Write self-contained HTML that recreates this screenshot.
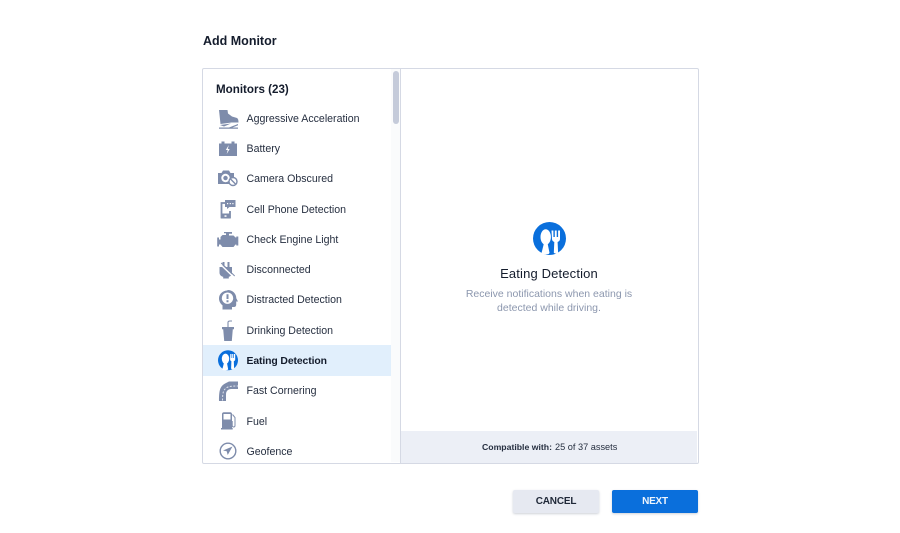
<!DOCTYPE html>
<html><head><meta charset="utf-8"><style>
html,body{margin:0;padding:0;background:#fff}
body{width:900px;height:533px;position:relative;overflow:hidden;font-family:"Liberation Sans",sans-serif;color:#1a2233}
.t{position:absolute;white-space:nowrap;line-height:14px}
.i{left:246.5px;font-size:10.600px;color:#262f40}
svg{position:absolute;left:0;top:0}
</style></head><body>
<div class="t" style="left:203px;top:34px;font-size:12.500px;font-weight:bold;color:#141c2c">Add Monitor</div>
<div style="position:absolute;left:202px;top:68px;width:495px;height:394px;border:1px solid #d5d9e4;border-radius:2px"></div>
<div style="position:absolute;left:391px;top:69px;width:9px;height:393px;background:#fafbfc"></div>
<div style="position:absolute;left:400px;top:69px;width:1px;height:394px;background:#d5d9e4"></div>
<div style="position:absolute;left:393px;top:71px;width:6px;height:53px;border-radius:3px;background:#c5cbda"></div>
<div style="position:absolute;left:203px;top:345px;width:188px;height:31px;background:#e1effc"></div>
<div style="position:absolute;left:401px;top:431px;width:296px;height:32px;background:#eceff6"></div>
<div class="t" style="left:216px;top:83px;font-size:11.600px;font-weight:bold;color:#141c2c">Monitors (23)</div>
<div class="t i" style="top:112px">Aggressive Acceleration</div>
<div class="t i" style="top:142px">Battery</div>
<div class="t i" style="top:172px">Camera Obscured</div>
<div class="t i" style="top:203px">Cell Phone Detection</div>
<div class="t i" style="top:233px">Check Engine Light</div>
<div class="t i" style="top:263px">Disconnected</div>
<div class="t i" style="top:293px">Distracted Detection</div>
<div class="t i" style="top:324px">Drinking Detection</div>
<div class="t i" style="top:355px;font-weight:bold;font-size:10.400px;letter-spacing:-.1px;color:#141c2c">Eating Detection</div>
<div class="t i" style="top:384px">Fast Cornering</div>
<div class="t i" style="top:415px">Fuel</div>
<div class="t i" style="top:445px">Geofence</div>
<svg width="900" height="533" viewBox="0 0 900 533">
<g fill="#7e8cab">
<!-- shoe -->
<path d="M219 110h8.500l.5 3.500 4 3 5 1.500c1 .5 1.500 2 1.500 4.500h-7l-11 1.500z"/>
<path d="M220 125l11-1.500-7 3z"/>
<path d="M219 127.500h10l9-3.500v1.200l-5.500 2.300h5.500v1.200h-19z"/>
<!-- battery -->
<path fill-rule="evenodd" d="M219 143.500h2.500v-2h3v2h7v-2h3v2h2.500v12.500h-18zM228.800 145l-3 5h1.900l-1 4 3-5h-1.900z"/>
<!-- camera -->
<path fill-rule="evenodd" d="M218 173h3.500l1.500-2.500h6l1.500 2.500h3.500v4c-3 .5-5 3-5 7h-10.500c-.5 0-.5 0-.5-.5zM225.500 173.800a4.200 4.200 0 1 0 .01 0z"/>
<path d="M225.500 175.800a2.200 2.200 0 1 0 .01 0z" fill="#7e8cab"/>
</g>
<g fill="none" stroke="#7e8cab" stroke-width="1.400"><circle cx="233" cy="181.500" r="4"/><path d="M230.300 178.800l5.400 5.400"/></g>
<!-- phone -->
<path fill="none" stroke="#7e8cab" stroke-width="1.800" d="M225 203h-3.500v14.500h8.500v-6.500"/>
<path fill="#7e8cab" d="M221 213.500h9.500v5h-9.500zM225 200h10.500v7h-6l-2.500 2v-2h-2z"/>
<g fill="#fff"><rect x="227" y="203" width="1.200" height="1.200"/><rect x="229.700" y="203" width="1.200" height="1.200"/><rect x="232.300" y="203" width="1.200" height="1.200"/><rect x="224.500" y="215.300" width="2" height="1.500"/></g>
<!-- engine -->
<path fill="#7e8cab" d="M224 232h8v1.800h-3v1.700h4.500l2 2h.8v-1h2v9h-2v-1h-.8l-2 2.500h-11l-2-2.500h-1.500v2h-1.800v-9h1.800v2h1.500v-2.500l2-2h3.500v-1.700h-2z"/>
<!-- plug -->
<path fill="#7e8cab" d="M222.500 262h2v5h3v-5h2v5h2.500v5.500c0 2.500-1.200 3.800-3.200 4.300v1.700h-5.600v-1.700c-2.200-.5-3.700-2-3.700-4.300v-5.500h3z"/>
<path stroke="#fff" stroke-width="1.400" d="M220.500 264.500l13 12.500"/>
<path stroke="#7e8cab" stroke-width="1" d="M221.200 263l13.500 13"/>
<!-- head -->
<path fill="#7e8cab" fill-rule="evenodd" d="M227.500 290c5.200 0 8.800 3.700 8.800 8.200l1.700 3.300h-1.800v3.200c0 1.500-1 2.300-2.200 2.300h-2v2.500h-9.500v-4.200c-2-1.500-3.500-4-3.500-6.800 0-4.500 3.700-8 8.500-8zM227.500 292.500a5.700 5.700 0 1 0 .01 0z"/>
<path fill="#7e8cab" d="M226.500 294.200h2v4.800h-2zM226.500 300.200h2v2h-2z"/>
<!-- drink -->
<path fill="#7e8cab" d="M222 327h12v2.200h-1.200l-1 11.800h-7.600l-1-11.800h-1.200z"/>
<path fill="none" stroke="#7e8cab" stroke-width="1.100" d="M228 327v-4.500c0-1 .5-1.500 2-1.500h2"/>
<!-- eating -->
<circle cx="228" cy="360.300" r="10" fill="#0a6fdc"/>
<g fill="#fff"><ellipse cx="225.500" cy="358.800" rx="3.700" ry="5.200"/><path d="M224.200 362h2.600l1.400 7.500c-1.600 1-4.600 1-6 .3zM230.300 354h1.200v4h.7v-4h1.100v4h.7v-4h1.200v5.500c0 .9-.7 1.400-1.400 1.700l.3 7.300c-1 1-2.200 1-3 0l.3-7.300c-.7-.3-1.300-.8-1.300-1.700z"/></g>
<!-- road -->
<path fill="#7e8cab" d="M219 401c0-11 1-15 7-18l3-1.500h9v7.500h-6.500c-3.500 0-5.500 2-5.500 5.500v6.500z"/>
<path fill="none" stroke="#dfe3ec" stroke-width="1" stroke-dasharray="2 1.500" d="M222.500 400.500c0-8 1-11 4.500-13 1.500-.8 3-1.500 11-1.500"/>
<!-- fuel -->
<path fill="#7e8cab" fill-rule="evenodd" d="M222 414c0-1 .8-1.800 1.800-1.800h6.400c1 0 1.800.8 1.800 1.800v14h.7v1.500h-11.700v-1.500h1zM223.500 414v5.500h7v-5.500z"/>
<path fill="none" stroke="#7e8cab" stroke-width="1" d="M232.500 414.500l2.500 3v8c0 2-2.800 2-2.800 0v-4h-.7"/>
<!-- geofence -->
<circle cx="228" cy="451" r="7.800" fill="none" stroke="#7e8cab" stroke-width="1.400"/>
<path fill="#7e8cab" d="M232.500 446.500l-9.500 4 3.700.8 1 3.700z"/>
<!-- large icon -->
<circle cx="549.500" cy="238.500" r="16.500" fill="#0a6fdc"/>
<g fill="#fff"><ellipse cx="545.700" cy="237" rx="5.200" ry="7.700"/><path d="M544 243h3.500l2 9.800c-.1.500-.4.900-1 1.200-2 .5-4.500.5-6.500 0-.5-.3-.6-.7-.4-1.200z"/>
<path d="M551.500 230.500h1.900v6.500h1.400v-6.500h1.900v6.500h1.400v-6.500h1.900v8.500c0 1.500-1.100 2.500-2.400 3l.5 10.800c-1.300 1-3 1-4.300 0l.5-10.800c-1.300-.5-2.300-1.500-2.300-3z"/></g>
</svg>
<div class="t" style="left:401px;width:296px;text-align:center;top:267px;font-size:13px;color:#141c2c;letter-spacing:.15px">Eating Detection</div>
<div class="t" style="left:401px;width:296px;text-align:center;top:287px;font-size:10.500px;color:#8c97ae">Receive notifications when eating is</div>
<div class="t" style="left:401px;width:296px;text-align:center;top:301px;font-size:10.500px;color:#8c97ae">detected while driving.</div>
<div class="t" style="left:482px;top:440px;font-size:8.700px;font-weight:bold;color:#262f40">Compatible with:</div>
<div class="t" style="left:555px;top:440px;font-size:9.200px;color:#262f40">25 of 37 assets</div>
<div class="t" style="left:513px;top:490px;width:86px;height:23px;line-height:24px;text-align:center;background:#e6e9f1;border-radius:2px;box-shadow:0 1px 2px rgba(60,70,100,.25);font-size:10px;letter-spacing:-.2px;font-weight:bold;color:#1f2838">CANCEL</div>
<div class="t" style="left:612px;top:490px;width:86px;height:23px;line-height:24px;text-align:center;background:#0a6fdc;border-radius:2px;box-shadow:0 1px 2px rgba(60,70,100,.25);font-size:10px;letter-spacing:-.2px;font-weight:bold;color:#eef5fd">NEXT</div>
</body></html>
